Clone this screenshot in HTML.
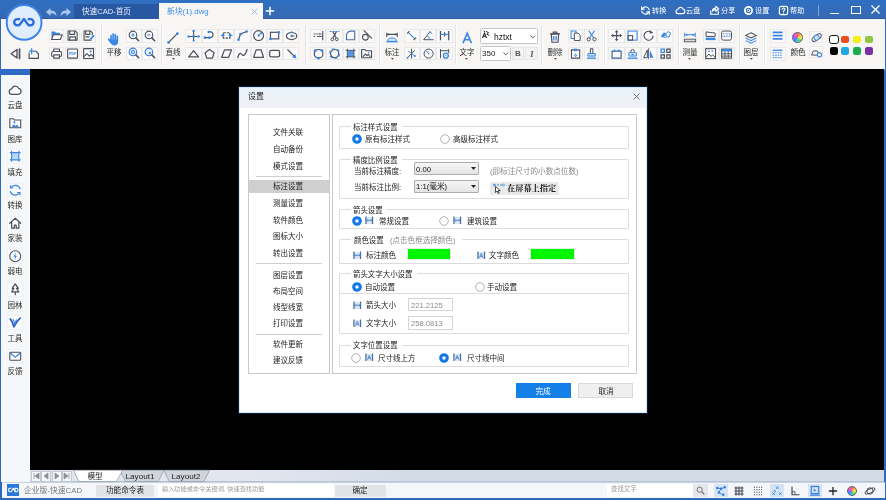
<!DOCTYPE html>
<html lang="zh-CN"><head><meta charset="utf-8"><title>快速CAD</title>
<style>
html,body{margin:0;padding:0;}
body{width:886px;height:500px;position:relative;overflow:hidden;background:#000;font-family:"Liberation Sans","Noto Sans CJK SC",sans-serif;}
body div,body svg{position:absolute;}
svg{overflow:visible;}
.t{white-space:nowrap;will-change:transform;}
</style></head><body>
<svg width="0" height="0" style="left:0;top:0"><defs><linearGradient id="wh" x1="0" y1="0" x2="1" y2="1"><stop offset="0" stop-color="#ff5a8a"/><stop offset=".35" stop-color="#ffd84a"/><stop offset=".6" stop-color="#6fdc6f"/><stop offset=".8" stop-color="#4ab0ff"/><stop offset="1" stop-color="#a05aff"/></linearGradient></defs></svg>
<div style="left:0px;top:0px;width:886px;height:500px;background:#2d6abb;"></div>
<div style="left:0px;top:0px;width:886px;height:18.7px;background:linear-gradient(#2e6fc2,#3869b1);"></div>
<div style="left:0px;top:17.9px;width:886px;height:0.8px;background:#2d5c9f;"></div>
<div style="left:1.2px;top:18.7px;width:883.4px;height:50.6px;background:#f7f6f5;"></div>
<div style="left:1.2px;top:68.6px;width:883.4px;height:0.7px;background:#c3cad6;"></div>
<div style="left:29.6px;top:69.3px;width:854.4px;height:400.7px;background:#000;"></div>
<div style="left:74.2px;top:4px;width:85.8px;height:14.7px;background:#2958a2;"></div>
<div class="t" style="left:81.5px;top:6.40px;height:12px;line-height:12px;font-size:7.6px;color:#e6eefb;">快速CAD-首页</div>
<div style="left:159px;top:3px;width:104px;height:16.5px;background:#f7f6f5;"></div>
<div class="t" style="left:167px;top:6.40px;height:12px;line-height:12px;font-size:7.8px;color:#3f8be6;">新块(1).dwg</div>
<svg style="left:250.5px;top:8px" width="7" height="7" viewBox="0 0 7 7"><path d="M.7.7l5.600 5.600M6.300.7L.7 6.300" stroke="#9dbbe0" stroke-width="1"/></svg>
<svg style="left:265px;top:5.500px" width="10" height="10" viewBox="0 0 10 10"><path d="M5 .8v8.400M.8 5h8.400" stroke="#fff" stroke-width="1.500"/></svg>
<svg style="left:46px;top:7.500px" width="11" height="9" viewBox="0 0 11 9"><path d="M0 4L4.500 0v2.500c4 0 6 2 6 6-1-2.500-3-3.200-6-3.200V8z" fill="#a9c8f0"/></svg>
<svg style="left:60px;top:7.500px" width="11" height="9" viewBox="0 0 11 9"><path d="M11 4L6.500 0v2.500c-4 0-6 2-6 6 1-2.500 3-3.200 6-3.200V8z" fill="#a9c8f0"/></svg>
<svg style="left:4px;top:1.500px" width="41" height="41" viewBox="0 0 41 41"><circle cx="20.100" cy="20.400" r="17.400" fill="#dfedfd" stroke="#3b82e6" stroke-width="1.900"/><g fill="none" stroke="#2b6fd6" stroke-width="2.400" stroke-linejoin="miter" stroke-linecap="butt"><path d="M16.200 17.100h-2.900a3.100 3.100 0 000 6.200h2.400"/><path d="M15.200 23.300l2-2.700 2.700-3.700 2.700 3.700 2 2.700" stroke-linejoin="round"/><path d="M23.600 17.100h2.900a3.100 3.100 0 010 6.200h-2.400"/></g></svg>
<svg style="left:639.8px;top:4.500px" width="11" height="11" viewBox="0 0 16 16"><g fill="none" stroke="#fff" stroke-width="1.700" stroke-linecap="round" stroke-linejoin="round"><path d="M13.500 7A5.500 5.500 0 004 4.500L2.500 6M2.500 9A5.500 5.500 0 0012 11.500L13.500 10"/><path d="M2.500 2.500V6H6M13.500 13.500V10H10"/></g></svg>
<div class="t" style="left:651.5px;top:5.20px;height:12px;line-height:12px;font-size:7.15px;color:#fff;">转换</div>
<svg style="left:674.5px;top:4.500px" width="11" height="11" viewBox="0 0 16 16"><g fill="none" stroke="#fff" stroke-width="1.700" stroke-linecap="round" stroke-linejoin="round"><path d="M4.500 12.500a3 3 0 01-.3-6 4 4 0 017.600-.5 3.300 3.300 0 01-.3 6.500z"/></g></svg>
<div class="t" style="left:686.3px;top:5.20px;height:12px;line-height:12px;font-size:7.15px;color:#fff;">云盘</div>
<svg style="left:708.8px;top:4.500px" width="11" height="11" viewBox="0 0 16 16"><g fill="none" stroke="#fff" stroke-width="1.700" stroke-linecap="round" stroke-linejoin="round"><path d="M2.500 9v4.500h11V9"/><path d="M5 9c0-3 2-4.500 5-4.500V2l4 3.500-4 3.500V6.800C7.500 6.800 6 7.500 5 9z"/></g></svg>
<div class="t" style="left:720.5px;top:5.20px;height:12px;line-height:12px;font-size:7.15px;color:#fff;">分享</div>
<svg style="left:743.4px;top:4.500px" width="11" height="11" viewBox="0 0 16 16"><g fill="none" stroke="#fff" stroke-width="1.700" stroke-linecap="round" stroke-linejoin="round"><circle cx="8" cy="8" r="5.300" stroke-width="2.600"/><circle cx="8" cy="8" r="1.800" stroke-width="1.400"/></g></svg>
<div class="t" style="left:755.3px;top:5.20px;height:12px;line-height:12px;font-size:7.15px;color:#fff;">设置</div>
<svg style="left:778.1px;top:4.500px" width="11" height="11" viewBox="0 0 16 16"><g fill="none" stroke="#fff" stroke-width="1.700" stroke-linecap="round" stroke-linejoin="round"><rect x="2" y="2" width="12" height="12" rx="2.500"/><path d="M6 6.300a2 2 0 114 0c0 1.400-2 1.600-2 3.200M8 11.800v.3" stroke-width="1.500"/></g></svg>
<div class="t" style="left:790.2px;top:5.20px;height:12px;line-height:12px;font-size:7.15px;color:#fff;">帮助</div>
<div style="left:818.3px;top:5px;width:1px;height:10.5px;background:#7fa6db;"></div>
<div style="left:830.4px;top:12.6px;width:8.2px;height:1.2px;background:#fff;"></div>
<div style="left:851px;top:5.5px;width:10px;height:8.4px;box-sizing:border-box;border:1.300px solid #fff;"></div>
<svg style="left:871.300px;top:5.300px" width="9" height="9" viewBox="0 0 9 9"><path d="M.5.500l8 8M8.500.5l-8 8" stroke="#fff" stroke-width="1.300"/></svg>
<svg style="left:8.95px;top:46.85px;" width="13.5" height="13.5" viewBox="0 0 16 16"><g fill="none" stroke="#4a4f59" stroke-width="1.6" stroke-linecap="round" stroke-linejoin="round"><path d="M9.500 3L2.500 8l7 5z"/><path d="M12.500 2.500v11" stroke-width="2"/></g></svg>
<svg style="left:27.25px;top:46.85px;" width="13.5" height="13.5" viewBox="0 0 16 16"><g fill="none" stroke="#4a4f59" stroke-width="1.35" stroke-linecap="round" stroke-linejoin="round"><path d="M2.500 7v6.500h11V8l-3-3H9"/></g><path d="M5.500 1.500v7M2.500 5h6" stroke="#3a86e4" stroke-width="1.500" fill="none"/></svg>
<div style="left:48.900000000000006px;top:28.800000000000004px;width:15.6px;height:13.8px;box-sizing:border-box;border:1px solid #ebe8e8;background:#f9f9fa;"></div>
<svg style="left:50.1px;top:29.1px;" width="13.2" height="13.2" viewBox="0 0 16 16"><path d="M1.800 3h4.200l1.200 1.600H12V7H3.500L1.800 11z" fill="#3a86e4"/><g fill="none" stroke="#4a4f59" stroke-width="1.350" stroke-linejoin="round"><path d="M1.800 12.800l2.400-5.800H15l-2.600 5.800z" fill="#fafafb"/></g></svg>
<div style="left:48.900000000000006px;top:46.6px;width:15.6px;height:13.8px;box-sizing:border-box;border:1px solid #ebe8e8;background:#f9f9fa;"></div>
<svg style="left:50.1px;top:46.9px;" width="13.2" height="13.2" viewBox="0 0 16 16"><g fill="none" stroke="#4a4f59" stroke-width="1.35" stroke-linecap="round" stroke-linejoin="round"><path d="M4.500 5.500v-3h7v3"/><rect x="2" y="5.500" width="12" height="6" rx="1.500"/><path d="M4.500 9.500h7v4h-7z" fill="#fff"/></g></svg>
<div style="left:64.8px;top:28.800000000000004px;width:15.6px;height:13.8px;box-sizing:border-box;border:1px solid #ebe8e8;background:#f9f9fa;"></div>
<svg style="left:66.0px;top:29.1px;" width="13.2" height="13.2" viewBox="0 0 16 16"><g fill="none" stroke="#4a4f59" stroke-width="1.35" stroke-linecap="round" stroke-linejoin="round"><path d="M2.5 2.5h9l2 2v9h-11z"/><path d="M4.5 2.5v4h6v-4"/><path d="M4.5 13.5v-4h7v4"/></g></svg>
<div style="left:64.8px;top:46.6px;width:15.6px;height:13.8px;box-sizing:border-box;border:1px solid #ebe8e8;background:#f9f9fa;"></div>
<svg style="left:66.0px;top:46.9px;" width="13.2" height="13.2" viewBox="0 0 16 16"><g fill="none" stroke="#4a4f59" stroke-width="1.35" stroke-linecap="round" stroke-linejoin="round"><rect x="2" y="2.500" width="12" height="11" rx="0.500"/></g><text x="8" y="10" font-size="4.500" font-weight="bold" text-anchor="middle" fill="#3a86e4" font-family="Liberation Sans,sans-serif">PDF</text></svg>
<div style="left:80.9px;top:28.800000000000004px;width:15.6px;height:13.8px;box-sizing:border-box;border:1px solid #ebe8e8;background:#f9f9fa;"></div>
<svg style="left:82.10000000000001px;top:29.1px;" width="13.2" height="13.2" viewBox="0 0 16 16"><g fill="none" stroke="#4a4f59" stroke-width="1.35" stroke-linecap="round" stroke-linejoin="round"><path d="M11 13.5H2.500v-11h8l2 2V7"/><path d="M4.500 2.500v4h5v-4"/><path d="M4.500 9.500h4"/></g><path d="M9 14l1-3 4-4 1.500 1.500-4 4z" fill="#3a86e4"/></svg>
<div style="left:80.9px;top:46.6px;width:15.6px;height:13.8px;box-sizing:border-box;border:1px solid #ebe8e8;background:#f9f9fa;"></div>
<svg style="left:82.10000000000001px;top:46.9px;" width="13.2" height="13.2" viewBox="0 0 16 16"><g fill="none" stroke="#4a4f59" stroke-width="1.35" stroke-linecap="round" stroke-linejoin="round"><rect x="2" y="2" width="12" height="12"/><path d="M2 12l4-4 3 3 2-2 3 3"/></g><circle cx="10.500" cy="5.500" r="1.300" fill="#3a86e4"/></svg>
<div style="left:101.3px;top:25px;width:1px;height:39.5px;background:#e3e4e8;"></div>
<div style="left:102.3px;top:25px;width:1px;height:39.5px;background:#fdfdfd;"></div>
<svg style="left:106.5px;top:31.5px;" width="14" height="14" viewBox="0 0 16 16"><g stroke="#3a86e4" stroke-width="1.900" stroke-linecap="round"><path d="M4.600 9V4.200M7 8.500V2.500M9.400 8.500V3M11.800 9V5"/><path d="M2 8.500l2.800 3.500" stroke-width="2.100"/></g><path d="M3.700 8.500h9.050v2.500c0 2.800-1.800 4.300-4.300 4.300-2.200 0-3.500-1-4.750-3.300z" fill="#3a86e4"/></svg>
<div class="t" style="left:113.5px;top:46.90px;height:12px;line-height:12px;font-size:7.5px;color:#2a2a2a;transform:translateX(-50%);">平移</div>
<div style="left:126.2px;top:28.800000000000004px;width:15.6px;height:13.8px;box-sizing:border-box;border:1px solid #ebe8e8;background:#f9f9fa;"></div>
<svg style="left:127.9px;top:29.6px;" width="12.2" height="12.2" viewBox="0 0 16 16"><circle cx="6.500" cy="6.500" r="5" fill="#fdfdfd" stroke="#4a4f59" stroke-width="1.400"/><path d="M10.300 10.300l3.700 3.700" stroke="#4a4f59" stroke-width="2" stroke-linecap="round"/><path d="M4.300 6.500h4.400M6.500 4.300v4.400" stroke="#3a86e4" stroke-width="1.400"/></svg>
<div style="left:126.2px;top:46.6px;width:15.6px;height:13.8px;box-sizing:border-box;border:1px solid #ebe8e8;background:#f9f9fa;"></div>
<svg style="left:127.9px;top:47.4px;" width="12.2" height="12.2" viewBox="0 0 16 16"><circle cx="6.500" cy="6.500" r="5" fill="#e6effb" stroke="#3a78d2" stroke-width="1.400"/><path d="M10.300 10.300l3.700 3.700" stroke="#4a4f59" stroke-width="2" stroke-linecap="round"/><circle cx="6.500" cy="6.500" r="2" fill="none" stroke="#3a86e4" stroke-width="1.400"/></svg>
<div style="left:142.2px;top:28.800000000000004px;width:15.6px;height:13.8px;box-sizing:border-box;border:1px solid #ebe8e8;background:#f9f9fa;"></div>
<svg style="left:143.9px;top:29.6px;" width="12.2" height="12.2" viewBox="0 0 16 16"><circle cx="6.500" cy="6.500" r="5" fill="#fdfdfd" stroke="#4a4f59" stroke-width="1.400"/><path d="M10.300 10.300l3.700 3.700" stroke="#4a4f59" stroke-width="2" stroke-linecap="round"/><path d="M4.300 6.500h4.400" stroke="#3a86e4" stroke-width="1.400"/></svg>
<div style="left:142.2px;top:46.6px;width:15.6px;height:13.8px;box-sizing:border-box;border:1px solid #ebe8e8;background:#f9f9fa;"></div>
<svg style="left:143.9px;top:47.4px;" width="12.2" height="12.2" viewBox="0 0 16 16"><circle cx="6.500" cy="6.500" r="5" fill="#e6effb" stroke="#3a78d2" stroke-width="1.400"/><path d="M10.300 10.300l3.700 3.700" stroke="#4a4f59" stroke-width="2" stroke-linecap="round"/><path d="M6.500 3.500v3h3a3 3 0 01-3 3z" fill="#3a86e4"/></svg>
<div style="left:160.9px;top:25px;width:1px;height:39.5px;background:#e3e4e8;"></div>
<div style="left:161.9px;top:25px;width:1px;height:39.5px;background:#fdfdfd;"></div>
<svg style="left:166.0px;top:30.700000000000003px;" width="14" height="14" viewBox="0 0 16 16"><path d="M3 13L13 3" stroke="#4a4f59" stroke-width="1.400"/><circle cx="3" cy="13" r="1.600" fill="#3a86e4"/><circle cx="13" cy="3" r="1.600" fill="#3a86e4"/></svg>
<div class="t" style="left:173px;top:46.90px;height:12px;line-height:12px;font-size:7.5px;color:#2a2a2a;transform:translateX(-50%);">直线</div>
<svg style="left:171.6px;top:57.800px" width="2.800" height="1.800" viewBox="0 0 4 2.500"><path d="M0 0h4L2 2.500z" fill="#444"/></svg>
<div style="left:185.4px;top:28.800000000000004px;width:16.2px;height:13.8px;box-sizing:border-box;border:1px solid #ebe8e8;background:#f9f9fa;"></div>
<svg style="left:186.9px;top:29.1px;" width="13.2" height="13.2" viewBox="0 0 16 16"><path d="M8 2v12.500M1.500 9h13" stroke="#4a4f59" stroke-width="1.300"/><circle cx="8" cy="9" r="1.600" fill="#3a86e4"/><circle cx="8" cy="2.300" r="1.500" fill="#3a86e4"/><circle cx="8" cy="14" r="1.300" fill="#3a86e4"/><circle cx="2" cy="9" r="1.500" fill="#3a86e4"/><circle cx="14" cy="9" r="1.500" fill="#3a86e4"/></svg>
<div style="left:185.4px;top:46.6px;width:16.2px;height:13.8px;box-sizing:border-box;border:1px solid #ebe8e8;background:#f9f9fa;"></div>
<svg style="left:186.9px;top:46.9px;" width="13.2" height="13.2" viewBox="0 0 16 16"><g fill="none" stroke="#4a4f59" stroke-width="1.5" stroke-linecap="round" stroke-linejoin="round"><path d="M8 4.500L2 12h12z"/></g></svg>
<div style="left:201.9px;top:28.800000000000004px;width:16.2px;height:13.8px;box-sizing:border-box;border:1px solid #ebe8e8;background:#f9f9fa;"></div>
<svg style="left:203.4px;top:29.1px;" width="13.2" height="13.2" viewBox="0 0 16 16"><path d="M2.500 10.500h6a3.600 3.600 0 10-1.500-6.800" fill="none" stroke="#4a4f59" stroke-width="1.400"/><circle cx="2.300" cy="10.500" r="1.600" fill="#3a86e4"/><circle cx="7.500" cy="10.500" r="1.600" fill="#3a86e4"/><circle cx="7" cy="3.600" r="1.600" fill="#3a86e4"/></svg>
<div style="left:201.9px;top:46.6px;width:16.2px;height:13.8px;box-sizing:border-box;border:1px solid #ebe8e8;background:#f9f9fa;"></div>
<svg style="left:203.4px;top:46.9px;" width="13.2" height="13.2" viewBox="0 0 16 16"><g fill="none" stroke="#4a4f59" stroke-width="1.5" stroke-linecap="round" stroke-linejoin="round"><path d="M8 3l5.500 4-2 6.500h-7l-2-6.500z"/></g></svg>
<div style="left:218.20000000000002px;top:28.800000000000004px;width:16.2px;height:13.8px;box-sizing:border-box;border:1px solid #ebe8e8;background:#f9f9fa;"></div>
<svg style="left:219.70000000000002px;top:29.1px;" width="13.2" height="13.2" viewBox="0 0 16 16"><rect x="4" y="4.500" width="8" height="6.500" fill="none" stroke="#4a4f59" stroke-width="1.400" stroke-dasharray="3 1.200"/><path d="M1 7.800h3M12 7.800h3" stroke="#3a86e4" stroke-width="1.300"/><circle cx="3.800" cy="7.800" r="1.600" fill="#3a86e4"/><circle cx="12.200" cy="7.800" r="1.600" fill="#3a86e4"/></svg>
<div style="left:218.20000000000002px;top:46.6px;width:16.2px;height:13.8px;box-sizing:border-box;border:1px solid #ebe8e8;background:#f9f9fa;"></div>
<svg style="left:219.70000000000002px;top:46.9px;" width="13.2" height="13.2" viewBox="0 0 16 16"><g fill="none" stroke="#4a4f59" stroke-width="1.5" stroke-linecap="round" stroke-linejoin="round"><path d="M5.500 3.500h8.500l-3.500 9H2z"/></g></svg>
<div style="left:234.4px;top:28.800000000000004px;width:16.2px;height:13.8px;box-sizing:border-box;border:1px solid #ebe8e8;background:#f9f9fa;"></div>
<svg style="left:235.9px;top:29.1px;" width="13.2" height="13.2" viewBox="0 0 16 16"><path d="M3 13l2.500-7L13 3" fill="none" stroke="#4a4f59" stroke-width="1.400"/><circle cx="3" cy="13" r="1.600" fill="#3a86e4"/><circle cx="5.500" cy="6" r="1.600" fill="#3a86e4"/><circle cx="13" cy="3" r="1.600" fill="#3a86e4"/></svg>
<div style="left:234.4px;top:46.6px;width:16.2px;height:13.8px;box-sizing:border-box;border:1px solid #ebe8e8;background:#f9f9fa;"></div>
<svg style="left:235.9px;top:46.9px;" width="13.2" height="13.2" viewBox="0 0 16 16"><g fill="none" stroke="#4a4f59" stroke-width="1.5" stroke-linecap="round" stroke-linejoin="round"><path d="M2 13c1.500-5 3-6.500 5-4s4 1.500 6.500-6"/></g></svg>
<div style="left:250.70000000000002px;top:28.800000000000004px;width:16.2px;height:13.8px;box-sizing:border-box;border:1px solid #ebe8e8;background:#f9f9fa;"></div>
<svg style="left:252.20000000000002px;top:29.1px;" width="13.2" height="13.2" viewBox="0 0 16 16"><circle cx="8" cy="8" r="6" fill="none" stroke="#4a4f59" stroke-width="1.400"/><path d="M8 8l3.500-3.500" stroke="#3a86e4" stroke-width="1.300"/><circle cx="8" cy="8" r="1.400" fill="#3a86e4"/><circle cx="11.300" cy="4.700" r="1.200" fill="#3a86e4"/></svg>
<div style="left:250.70000000000002px;top:46.6px;width:16.2px;height:13.8px;box-sizing:border-box;border:1px solid #ebe8e8;background:#f9f9fa;"></div>
<svg style="left:252.20000000000002px;top:46.9px;" width="13.2" height="13.2" viewBox="0 0 16 16"><g fill="none" stroke="#4a4f59" stroke-width="1.5" stroke-linecap="round" stroke-linejoin="round"><path d="M5 3.500h6l3 9H2z"/></g></svg>
<div style="left:266.7px;top:28.800000000000004px;width:16.2px;height:13.8px;box-sizing:border-box;border:1px solid #ebe8e8;background:#f9f9fa;"></div>
<svg style="left:268.2px;top:29.1px;" width="13.2" height="13.2" viewBox="0 0 16 16"><rect x="3" y="4" width="10" height="8" fill="none" stroke="#4a4f59" stroke-width="1.400"/><circle cx="3" cy="12" r="1.700" fill="#3a86e4"/><circle cx="13" cy="4" r="1.700" fill="#3a86e4"/></svg>
<div style="left:266.7px;top:46.6px;width:16.2px;height:13.8px;box-sizing:border-box;border:1px solid #ebe8e8;background:#f9f9fa;"></div>
<svg style="left:268.2px;top:46.9px;" width="13.2" height="13.2" viewBox="0 0 16 16"><g fill="none" stroke="#4a4f59" stroke-width="1.5" stroke-linecap="round" stroke-linejoin="round"><rect x="2" y="4" width="12" height="8" rx="2"/></g></svg>
<div style="left:283.2px;top:28.800000000000004px;width:16.2px;height:13.8px;box-sizing:border-box;border:1px solid #ebe8e8;background:#f9f9fa;"></div>
<svg style="left:284.7px;top:29.1px;" width="13.2" height="13.2" viewBox="0 0 16 16"><ellipse cx="8" cy="8.500" rx="6.300" ry="4.300" fill="none" stroke="#4a4f59" stroke-width="1.400"/><circle cx="8" cy="8.500" r="1.400" fill="#3a86e4"/><path d="M8 8.500h3.500" stroke="#4a4f59" stroke-width="1.100"/><circle cx="8" cy="4" r="1.200" fill="#3a86e4"/></svg>
<div style="left:283.2px;top:46.6px;width:16.2px;height:13.8px;box-sizing:border-box;border:1px solid #ebe8e8;background:#f9f9fa;"></div>
<svg style="left:284.7px;top:46.9px;" width="13.2" height="13.2" viewBox="0 0 16 16"><path d="M3 3l9 9" stroke="#4a4f59" stroke-width="1.500"/><path d="M14 14l-5.500-1.500 4-4z" fill="#3a86e4"/></svg>
<div style="left:305.3px;top:25px;width:1px;height:39.5px;background:#e3e4e8;"></div>
<div style="left:306.3px;top:25px;width:1px;height:39.5px;background:#fdfdfd;"></div>
<div style="left:310.09999999999997px;top:28.800000000000004px;width:16.2px;height:13.8px;box-sizing:border-box;border:1px solid #ebe8e8;background:#f9f9fa;"></div>
<svg style="left:311.59999999999997px;top:29.1px;" width="13.2" height="13.2" viewBox="0 0 16 16"><path d="M2 6h7M2 9h3" stroke="#4a4f59" stroke-width="1.200" stroke-dasharray="2 1"/><path d="M6 9h6" stroke="#4a4f59" stroke-width="1.200"/><path d="M13 2.500v11" stroke="#4a4f59" stroke-width="1.400"/><path d="M9 4.500L11.500 6 9 7.500z" fill="#4a4f59"/></svg>
<div style="left:310.09999999999997px;top:46.6px;width:16.2px;height:13.8px;box-sizing:border-box;border:1px solid #ebe8e8;background:#f9f9fa;"></div>
<svg style="left:311.59999999999997px;top:46.9px;" width="13.2" height="13.2" viewBox="0 0 16 16"><circle cx="8" cy="8.300" r="5.300" fill="none" stroke="#4a4f59" stroke-width="1.400"/><circle cx="3.800" cy="4.300" r="1.700" fill="#3a86e4"/><circle cx="12.200" cy="4.300" r="1.700" fill="#3a86e4"/><circle cx="8" cy="13.600" r="1.700" fill="#3a86e4"/></svg>
<div style="left:326.4px;top:28.800000000000004px;width:16.2px;height:13.8px;box-sizing:border-box;border:1px solid #ebe8e8;background:#f9f9fa;"></div>
<svg style="left:327.9px;top:29.1px;" width="13.2" height="13.2" viewBox="0 0 16 16"><path d="M2 3h12" stroke="#3a86e4" stroke-width="1.300" stroke-dasharray="2.500 1"/><path d="M6 3.500l4 7.500M10 3.500L6 11" stroke="#4a4f59" stroke-width="1.400"/><circle cx="5.300" cy="12.500" r="1.700" fill="none" stroke="#4a4f59" stroke-width="1.200"/><circle cx="10.700" cy="12.500" r="1.700" fill="none" stroke="#4a4f59" stroke-width="1.200"/></svg>
<div style="left:326.4px;top:46.6px;width:16.2px;height:13.8px;box-sizing:border-box;border:1px solid #ebe8e8;background:#f9f9fa;"></div>
<svg style="left:327.9px;top:46.9px;" width="13.2" height="13.2" viewBox="0 0 16 16"><circle cx="8" cy="8" r="5" fill="none" stroke="#4a4f59" stroke-width="1.400"/><path d="M5 2.500h6l2.500 2.500v6L11 13.500H5L2.500 11V5z" fill="none" stroke="#3a86e4" stroke-width="1.500" stroke-dasharray="3.500 2.800"/></svg>
<div style="left:342.59999999999997px;top:28.800000000000004px;width:16.2px;height:13.8px;box-sizing:border-box;border:1px solid #ebe8e8;background:#f9f9fa;"></div>
<svg style="left:344.09999999999997px;top:29.1px;" width="13.2" height="13.2" viewBox="0 0 16 16"><path d="M3 13V8a5.500 5.500 0 015.500-5.500H13V13z" fill="none" stroke="#4a6fa8" stroke-width="1.400"/></svg>
<div style="left:342.59999999999997px;top:46.6px;width:16.2px;height:13.8px;box-sizing:border-box;border:1px solid #ebe8e8;background:#f9f9fa;"></div>
<svg style="left:344.09999999999997px;top:46.9px;" width="13.2" height="13.2" viewBox="0 0 16 16"><rect x="4" y="4" width="8" height="8" fill="#3a86e4" opacity=".85"/><path d="M2 4h12M2 12h12M4 2v12M12 2v12" stroke="#4a4f59" stroke-width="1.100"/></svg>
<div style="left:358.79999999999995px;top:28.800000000000004px;width:16.2px;height:13.8px;box-sizing:border-box;border:1px solid #ebe8e8;background:#f9f9fa;"></div>
<svg style="left:360.29999999999995px;top:29.1px;" width="13.2" height="13.2" viewBox="0 0 16 16"><g fill="none" stroke="#4a4f59" stroke-width="1.35" stroke-linecap="round" stroke-linejoin="round"><circle cx="6.500" cy="10" r="3.500"/><path d="M5 2l9 9"/></g></svg>
<div style="left:358.79999999999995px;top:46.6px;width:16.2px;height:13.8px;box-sizing:border-box;border:1px solid #ebe8e8;background:#f9f9fa;"></div>
<svg style="left:360.29999999999995px;top:46.9px;" width="13.2" height="13.2" viewBox="0 0 16 16"><g fill="none" stroke="#4a4f59" stroke-width="1.35" stroke-linecap="round" stroke-linejoin="round"><path d="M2 13V3h4l1 1.500h7V13z"/><path d="M4 11.500l2.500-3 2 2 1.500-1.500 2 2.500"/></g><circle cx="10.500" cy="7" r="1" fill="#3a86e4"/></svg>
<div style="left:378.9px;top:25px;width:1px;height:39.5px;background:#e3e4e8;"></div>
<div style="left:379.9px;top:25px;width:1px;height:39.5px;background:#fdfdfd;"></div>
<svg style="left:384.9px;top:30.299999999999997px;" width="14" height="14" viewBox="0 0 16 16"><path d="M2 3v5M14 3v5M2 5h12" stroke="#4a4f59" stroke-width="1.200"/><path d="M2 5l2.500-1.300v2.600zM14 5l-2.500-1.300v2.600z" fill="#4a4f59"/><path d="M3 13a5 4 0 0110 0z" fill="#cfe2f8" stroke="#3a86e4" stroke-width="1.100"/><path d="M1.500 13.500h13" stroke="#3a86e4" stroke-width="1.300"/></svg>
<div class="t" style="left:391.9px;top:46.90px;height:12px;line-height:12px;font-size:7.5px;color:#2a2a2a;transform:translateX(-50%);">标注</div>
<svg style="left:390.5px;top:57.800px" width="2.800" height="1.800" viewBox="0 0 4 2.500"><path d="M0 0h4L2 2.500z" fill="#444"/></svg>
<div style="left:403.59999999999997px;top:28.800000000000004px;width:16.2px;height:13.8px;box-sizing:border-box;border:1px solid #ebe8e8;background:#f9f9fa;"></div>
<svg style="left:405.09999999999997px;top:29.1px;" width="13.2" height="13.2" viewBox="0 0 16 16"><path d="M4 4l8 8" stroke="#3a86e4" stroke-width="1.300"/><path d="M2.500 5.500l3-3M10.500 13.500l3-3" stroke="#4a4f59" stroke-width="1.300"/></svg>
<div style="left:403.59999999999997px;top:46.6px;width:16.2px;height:13.8px;box-sizing:border-box;border:1px solid #ebe8e8;background:#f9f9fa;"></div>
<svg style="left:405.09999999999997px;top:46.9px;" width="13.2" height="13.2" viewBox="0 0 16 16"><path d="M8 2v12M3 13L12 4" stroke="#4a4f59" stroke-width="1.200"/><path d="M4 5l8 6" stroke="#3a86e4" stroke-width="1.200"/><circle cx="3" cy="13" r="1.200" fill="#3a86e4"/><circle cx="12" cy="11" r="1.200" fill="#3a86e4"/></svg>
<div style="left:420.09999999999997px;top:28.800000000000004px;width:16.2px;height:13.8px;box-sizing:border-box;border:1px solid #ebe8e8;background:#f9f9fa;"></div>
<svg style="left:421.59999999999997px;top:29.1px;" width="13.2" height="13.2" viewBox="0 0 16 16"><path d="M2 13h12M2 13L10 3" stroke="#4a4f59" stroke-width="1.200"/><path d="M9 13a6 6 0 00-2.500-5" fill="none" stroke="#3a86e4" stroke-width="1.200"/><path d="M9 3l3.500 3" stroke="#3a86e4" stroke-width="1.200"/></svg>
<div style="left:420.09999999999997px;top:46.6px;width:16.2px;height:13.8px;box-sizing:border-box;border:1px solid #ebe8e8;background:#f9f9fa;"></div>
<svg style="left:421.59999999999997px;top:46.9px;" width="13.2" height="13.2" viewBox="0 0 16 16"><circle cx="8" cy="8" r="5.500" fill="none" stroke="#4a4f59" stroke-width="1.200"/><path d="M8 8L4.500 4" stroke="#3a86e4" stroke-width="1.200"/><circle cx="8" cy="8" r="1" fill="#3a86e4"/></svg>
<div style="left:436.4px;top:28.800000000000004px;width:16.2px;height:13.8px;box-sizing:border-box;border:1px solid #ebe8e8;background:#f9f9fa;"></div>
<svg style="left:437.9px;top:29.1px;" width="13.2" height="13.2" viewBox="0 0 16 16"><path d="M3 2.500v11M13 2.500v11M8 4v5" stroke="#4a4f59" stroke-width="1.500"/><path d="M3 6.500h10" stroke="#3a86e4" stroke-width="1.400"/></svg>
<div style="left:436.4px;top:46.6px;width:16.2px;height:13.8px;box-sizing:border-box;border:1px solid #ebe8e8;background:#f9f9fa;"></div>
<svg style="left:437.9px;top:46.9px;" width="13.2" height="13.2" viewBox="0 0 16 16"><path d="M3 2.500v11M13 2.500v5M3 4.500h10" stroke="#4a4f59" stroke-width="1.200"/><circle cx="9.500" cy="10.500" r="3" fill="none" stroke="#3a86e4" stroke-width="1.600"/><circle cx="9.500" cy="10.500" r=".8" fill="#3a86e4"/></svg>
<div style="left:454.7px;top:25px;width:1px;height:39.5px;background:#e3e4e8;"></div>
<div style="left:455.7px;top:25px;width:1px;height:39.5px;background:#fdfdfd;"></div>
<svg style="left:460.6px;top:31.599999999999998px;" width="12.4" height="12.4" viewBox="0 0 16 16"><path d="M2.500 14.500L8 1.800 13.500 14.500M4.500 10h7" fill="none" stroke="#3a86e4" stroke-width="2.100"/></svg>
<div class="t" style="left:466.5px;top:46.90px;height:12px;line-height:12px;font-size:7.5px;color:#2a2a2a;transform:translateX(-50%);">文字</div>
<svg style="left:465.1px;top:57.800px" width="2.800" height="1.800" viewBox="0 0 4 2.500"><path d="M0 0h4L2 2.500z" fill="#444"/></svg>
<div style="left:479.8px;top:28.3px;width:57.8px;height:15.9px;box-sizing:border-box;border:1px solid #c3c6cc;background:#fff;border-radius:1.500px;"></div>
<svg style="left:479.5px;top:28.9px;" width="13" height="13" viewBox="0 0 16 16"><path d="M3 11l2.500-6 2.500 6M3.800 9h3.400" fill="none" stroke="#222" stroke-width="1.300"/><path d="M7.500 3l3 1.500-2 2 3 1.500M4.500 2.500l2 1" fill="none" stroke="#222" stroke-width="1.200"/></svg>
<div class="t" style="left:494px;top:31.10px;height:12px;line-height:12px;font-size:8.5px;color:#111;">hztxt</div>
<svg style="left:529.500px;top:34.500px" width="5.500" height="4" viewBox="0 0 6 4"><path d="M.5.500L3 3 5.500.5" fill="none" stroke="#444" stroke-width="1"/></svg>
<div style="left:479.8px;top:46.2px;width:30.8px;height:14.4px;box-sizing:border-box;border:1px solid #c3c6cc;background:#fff;border-radius:1.500px;"></div>
<div class="t" style="left:482.3px;top:47.90px;height:12px;line-height:12px;font-size:8.1px;color:#222;">350</div>
<svg style="left:502.500px;top:52px" width="5.500" height="4" viewBox="0 0 6 4"><path d="M.5.500L3 3 5.500.5" fill="none" stroke="#444" stroke-width="1"/></svg>
<div style="left:512px;top:46.7px;width:12.3px;height:13.8px;box-sizing:border-box;border:1px solid #e6e6e6;background:#f3f3f3;"></div>
<div class="t" style="left:518.1px;top:48.20px;height:12px;line-height:12px;font-size:8px;color:#555;transform:translateX(-50%);font-weight:bold;">B</div>
<div style="left:525.3px;top:46.7px;width:12.3px;height:13.8px;box-sizing:border-box;border:1px solid #e6e6e6;background:#f3f3f3;"></div>
<div class="t" style="left:531.5px;top:48.20px;height:12px;line-height:12px;font-size:8.5px;color:#555;transform:translateX(-50%);font-style:italic;font-family:'Liberation Serif',serif;font-weight:bold;">I</div>
<div style="left:541.3px;top:25px;width:1px;height:39.5px;background:#e3e4e8;"></div>
<div style="left:542.3px;top:25px;width:1px;height:39.5px;background:#fdfdfd;"></div>
<svg style="left:548.0px;top:30.299999999999997px;" width="14" height="14" viewBox="0 0 16 16"><path d="M2.500 4.500h11M6 4.500v-2h4v2" fill="none" stroke="#4a4f59" stroke-width="1.300"/><path d="M3.800 4.500l.7 9.500h7l.7-9.500z" fill="none" stroke="#4a4f59" stroke-width="1.300"/><path d="M6.300 7v5M8 7v5M9.700 7v5" stroke="#3a86e4" stroke-width="1"/></svg>
<div class="t" style="left:555px;top:46.90px;height:12px;line-height:12px;font-size:7.5px;color:#2a2a2a;transform:translateX(-50%);">删除</div>
<svg style="left:553.6px;top:57.800px" width="2.800" height="1.800" viewBox="0 0 4 2.500"><path d="M0 0h4L2 2.500z" fill="#444"/></svg>
<div style="left:567.8000000000001px;top:28.800000000000004px;width:15.6px;height:13.8px;box-sizing:border-box;border:1px solid #ebe8e8;background:#f9f9fa;"></div>
<svg style="left:569.0px;top:29.1px;" width="13.2" height="13.2" viewBox="0 0 16 16"><path d="M2.500 2.500h6v9h-6z" fill="none" stroke="#3a86e4" stroke-width="1.300"/><path d="M6.500 5h4.500l2.500 2.500v6.500h-7z" fill="#fff" stroke="#4a4f59" stroke-width="1.200"/></svg>
<div style="left:567.8000000000001px;top:46.6px;width:15.6px;height:13.8px;box-sizing:border-box;border:1px solid #ebe8e8;background:#f9f9fa;"></div>
<svg style="left:569.0px;top:46.9px;" width="13.2" height="13.2" viewBox="0 0 16 16"><path d="M10 3.500h3v10H3v-10h3" fill="none" stroke="#4a4f59" stroke-width="1.300"/><rect x="6" y="2" width="4" height="3" fill="#3a86e4"/><path d="M8 8v4M6 10h4" stroke="#3a86e4" stroke-width="1.200" stroke-dasharray="1.500 1"/></svg>
<div style="left:583.9000000000001px;top:28.800000000000004px;width:15.6px;height:13.8px;box-sizing:border-box;border:1px solid #ebe8e8;background:#f9f9fa;"></div>
<svg style="left:585.1px;top:29.1px;" width="13.2" height="13.2" viewBox="0 0 16 16"><path d="M4.500 2l6 9M11.500 2l-6 9" stroke="#3a86e4" stroke-width="1.300"/><circle cx="4.500" cy="12.500" r="2" fill="none" stroke="#4a4f59" stroke-width="1.200"/><circle cx="11.500" cy="12.500" r="2" fill="none" stroke="#4a4f59" stroke-width="1.200"/></svg>
<div style="left:583.9000000000001px;top:46.6px;width:15.6px;height:13.8px;box-sizing:border-box;border:1px solid #ebe8e8;background:#f9f9fa;"></div>
<svg style="left:585.1px;top:46.9px;" width="13.2" height="13.2" viewBox="0 0 16 16"><path d="M6.500 2h3v6h-3z" fill="none" stroke="#4a4f59" stroke-width="1.200"/><path d="M3.500 8h9v3h-9z" fill="#cfe2f8" stroke="#3a86e4" stroke-width="1.200"/><path d="M2.500 13.500h11" stroke="#3a86e4" stroke-width="1.600"/></svg>
<div style="left:603.8px;top:25px;width:1px;height:39.5px;background:#e3e4e8;"></div>
<div style="left:604.8px;top:25px;width:1px;height:39.5px;background:#fdfdfd;"></div>
<div style="left:608.4px;top:28.800000000000004px;width:16.2px;height:13.8px;box-sizing:border-box;border:1px solid #ebe8e8;background:#f9f9fa;"></div>
<svg style="left:609.9px;top:29.1px;" width="13.2" height="13.2" viewBox="0 0 16 16"><path d="M8 3v10M3 8h10" stroke="#4a4f59" stroke-width="1.300"/><path d="M8 1.200l2.200 2.800H5.800zM8 14.800l2.200-2.800H5.800zM1.200 8l2.800-2.200v4.400zM14.800 8l-2.800-2.200v4.400z" fill="#4a4f59"/><circle cx="8" cy="8" r="1.300" fill="#4a4f59"/></svg>
<div style="left:608.4px;top:46.6px;width:16.2px;height:13.8px;box-sizing:border-box;border:1px solid #ebe8e8;background:#f9f9fa;"></div>
<svg style="left:609.9px;top:46.9px;" width="13.2" height="13.2" viewBox="0 0 16 16"><path d="M2.500 5v8.500h11V5z" fill="none" stroke="#3d6296" stroke-width="1.400"/><path d="M5.500 3v2.500M10.500 3v2.500" stroke="#3a86e4" stroke-width="1.800"/></svg>
<div style="left:624.8px;top:28.800000000000004px;width:16.2px;height:13.8px;box-sizing:border-box;border:1px solid #ebe8e8;background:#f9f9fa;"></div>
<svg style="left:626.3px;top:29.1px;" width="13.2" height="13.2" viewBox="0 0 16 16"><rect x="2.500" y="2.500" width="11" height="11" fill="none" stroke="#3a86e4" stroke-width="1.300"/><rect x="2.500" y="8" width="5.500" height="5.500" fill="none" stroke="#4a4f59" stroke-width="1.200"/></svg>
<div style="left:624.8px;top:46.6px;width:16.2px;height:13.8px;box-sizing:border-box;border:1px solid #ebe8e8;background:#f9f9fa;"></div>
<svg style="left:626.3px;top:46.9px;" width="13.2" height="13.2" viewBox="0 0 16 16"><path d="M6 7V5a2 2 0 014 0v2" fill="none" stroke="#4a4f59" stroke-width="1.200"/><rect x="3.500" y="7" width="9" height="4" rx="1" fill="none" stroke="#3a86e4" stroke-width="1.300"/><path d="M2 13.500h12" stroke="#3a86e4" stroke-width="1.600"/><rect x="6.500" y="8.500" width="3" height="1.500" fill="#3a86e4"/></svg>
<div style="left:640.9px;top:28.800000000000004px;width:16.2px;height:13.8px;box-sizing:border-box;border:1px solid #ebe8e8;background:#f9f9fa;"></div>
<svg style="left:642.4px;top:29.1px;" width="13.2" height="13.2" viewBox="0 0 16 16"><path d="M12.500 5A5.500 5.500 0 1013.500 8" fill="none" stroke="#4a4f59" stroke-width="1.300"/><path d="M10 1.500l3.500 3.500-4.500.500z" fill="#4a4f59"/></svg>
<div style="left:640.9px;top:46.6px;width:16.2px;height:13.8px;box-sizing:border-box;border:1px solid #ebe8e8;background:#f9f9fa;"></div>
<svg style="left:642.4px;top:46.9px;" width="13.2" height="13.2" viewBox="0 0 16 16"><path d="M8 1.500v13" stroke="#4a4f59" stroke-width="1.100"/><path d="M6.500 3.500v9.500H2z" fill="none" stroke="#4a4f59" stroke-width="1.200"/><path d="M9.500 3.500v9.500H14z" fill="#3a86e4"/></svg>
<div style="left:657.1px;top:28.800000000000004px;width:16.2px;height:13.8px;box-sizing:border-box;border:1px solid #ebe8e8;background:#f9f9fa;"></div>
<svg style="left:658.6px;top:29.1px;" width="13.2" height="13.2" viewBox="0 0 16 16"><path d="M2 9l4-5 3 2-2 5z" fill="#3a86e4"/><path d="M8 6l3-3 3 2-2 5-3-1z" fill="none" stroke="#3a86e4" stroke-width="1.200"/><circle cx="7.500" cy="9" r="1.500" fill="#fff" stroke="#3a86e4"/></svg>
<div style="left:657.1px;top:46.6px;width:16.2px;height:13.8px;box-sizing:border-box;border:1px solid #ebe8e8;background:#f9f9fa;"></div>
<svg style="left:658.6px;top:46.9px;" width="13.2" height="13.2" viewBox="0 0 16 16"><g fill="none" stroke="#4a4f59" stroke-width="1.500"><rect x="9.500" y="2.500" width="4" height="4"/><rect x="2.500" y="9.500" width="4" height="4"/><rect x="9.500" y="9.500" width="4" height="4"/></g><rect x="2.500" y="2.500" width="4" height="4" fill="none" stroke="#3a86e4" stroke-width="1.500"/></svg>
<div style="left:677.8px;top:25px;width:1px;height:39.5px;background:#e3e4e8;"></div>
<div style="left:678.8px;top:25px;width:1px;height:39.5px;background:#fdfdfd;"></div>
<svg style="left:682.8px;top:30.299999999999997px;" width="14" height="14" viewBox="0 0 16 16"><path d="M2 3v5M14 3v5M3 5.500h10" stroke="#3a86e4" stroke-width="1.200"/><path d="M2.500 5.500l2.500-1.500v3zM13.500 5.500L11 4v3z" fill="#3a86e4"/><rect x="1.500" y="10.500" width="13" height="3" fill="#ddd" stroke="#4a4f59" stroke-width="1"/></svg>
<div class="t" style="left:689.8px;top:46.90px;height:12px;line-height:12px;font-size:7.5px;color:#2a2a2a;transform:translateX(-50%);">测量</div>
<svg style="left:688.4px;top:57.800px" width="2.800" height="1.800" viewBox="0 0 4 2.500"><path d="M0 0h4L2 2.500z" fill="#444"/></svg>
<div style="left:703.0px;top:28.800000000000004px;width:15.8px;height:13.8px;box-sizing:border-box;border:1px solid #ebe8e8;background:#f9f9fa;"></div>
<svg style="left:704.3px;top:29.1px;" width="13.2" height="13.2" viewBox="0 0 16 16"><path d="M2.500 3.500l11 1.500v4h-11z" fill="none" stroke="#4a4f59" stroke-width="1.200"/><rect x="2" y="10.500" width="12" height="3" fill="#3a86e4"/></svg>
<div style="left:703.0px;top:46.6px;width:15.8px;height:13.8px;box-sizing:border-box;border:1px solid #ebe8e8;background:#f9f9fa;"></div>
<svg style="left:704.3px;top:46.9px;" width="13.2" height="13.2" viewBox="0 0 16 16"><rect x="2" y="2" width="12" height="12" fill="none" stroke="#4a4f59" stroke-width="1.300"/><path d="M2.500 12.500l3.500-4 2.500 3 2-2 3 3" fill="none" stroke="#4a4f59" stroke-width="1.200"/><path d="M5 5h2M9 5h2" stroke="#3a86e4" stroke-width="1.600"/></svg>
<div style="left:719.1px;top:28.800000000000004px;width:15.8px;height:13.8px;box-sizing:border-box;border:1px solid #ebe8e8;background:#f9f9fa;"></div>
<svg style="left:720.4px;top:29.1px;" width="13.2" height="13.2" viewBox="0 0 16 16"><rect x="2" y="2.500" width="12" height="11" rx="2" fill="none" stroke="#4a4f59" stroke-width="1.200"/><text x="8" y="10.200" font-size="5.800" text-anchor="middle" fill="#3a86e4" font-family="Liberation Sans,sans-serif">123</text></svg>
<div style="left:719.1px;top:46.6px;width:15.8px;height:13.8px;box-sizing:border-box;border:1px solid #ebe8e8;background:#f9f9fa;"></div>
<svg style="left:720.4px;top:46.9px;" width="13.2" height="13.2" viewBox="0 0 16 16"><rect x="2" y="2.500" width="12" height="11" fill="none" stroke="#4a4f59" stroke-width="1.300"/><rect x="2" y="2.500" width="12" height="3" fill="#3a86e4"/><path d="M2 8.200h12M2 11h12M6 5.500v8M10 5.500v8" stroke="#4a4f59" stroke-width="1.100"/></svg>
<div style="left:739.3px;top:25px;width:1px;height:39.5px;background:#e3e4e8;"></div>
<div style="left:740.3px;top:25px;width:1px;height:39.5px;background:#fdfdfd;"></div>
<svg style="left:744.3px;top:30.700000000000003px;" width="14" height="14" viewBox="0 0 16 16"><path d="M8 2l6 3-6 3-6-3z" fill="none" stroke="#4a4f59" stroke-width="1.200"/><path d="M2 8l6 3 6-3M2 11l6 3 6-3" fill="none" stroke="#3a86e4" stroke-width="1.200"/></svg>
<div class="t" style="left:751.3px;top:46.90px;height:12px;line-height:12px;font-size:7.5px;color:#2a2a2a;transform:translateX(-50%);">图层</div>
<svg style="left:749.9px;top:57.800px" width="2.800" height="1.800" viewBox="0 0 4 2.500"><path d="M0 0h4L2 2.500z" fill="#444"/></svg>
<div style="left:764.0px;top:25px;width:1px;height:39.5px;background:#e3e4e8;"></div>
<div style="left:765.0px;top:25px;width:1px;height:39.5px;background:#fdfdfd;"></div>
<div style="left:770.2px;top:28.800000000000004px;width:15.6px;height:13.8px;box-sizing:border-box;border:1px solid #ebe8e8;background:#f9f9fa;"></div>
<svg style="left:771.4px;top:29.1px;" width="13.2" height="13.2" viewBox="0 0 16 16"><path d="M2 4h12M2 8h12M2 12h12" stroke="#3a86e4" stroke-width="2.200"/></svg>
<div style="left:770.2px;top:46.9px;width:15.6px;height:13.8px;box-sizing:border-box;border:1px solid #ebe8e8;background:#f9f9fa;"></div>
<svg style="left:771.4px;top:47.199999999999996px;" width="13.2" height="13.2" viewBox="0 0 16 16"><path d="M2 4h12" stroke="#3a86e4" stroke-width="1.600"/><path d="M2 7h12M2 10h12M2 13h12" stroke="#3a86e4" stroke-width="1.200" stroke-dasharray="2 1"/></svg>
<div style="left:792.4000000000001px;top:32.2px;width:10.6px;height:10.6px;background:conic-gradient(from 0deg,#ff5a7a,#ffb03a,#f3f04a,#7ddc5a,#3ad0c8,#4a90ff,#a05aff,#ff5ac8,#ff5a7a);border-radius:50%;box-sizing:border-box;border:1px solid #5a5f6a;"></div>
<div class="t" style="left:798px;top:46.90px;height:12px;line-height:12px;font-size:7.6px;color:#222;transform:translateX(-50%);">颜色</div>
<div style="left:809.45px;top:30.950000000000003px;width:13.5px;height:12.5px;box-sizing:border-box;border:1px solid #ebe8e8;background:#f9f9fa;"></div>
<svg style="left:809.6px;top:30.6px;" width="13.2" height="13.2" viewBox="0 0 16 16"><ellipse cx="8" cy="8" rx="6.500" ry="3" transform="rotate(-35 8 8)" fill="none" stroke="#4a4f59" stroke-width="1.200"/><circle cx="8" cy="8" r="3.200" fill="#cfe2f8" stroke="#3a86e4" stroke-width="1.200"/></svg>
<div style="left:809.45px;top:45.95px;width:13.5px;height:12.5px;box-sizing:border-box;border:1px solid #ebe8e8;background:#f9f9fa;"></div>
<svg style="left:809.6px;top:45.6px;" width="13.2" height="13.2" viewBox="0 0 16 16"><path d="M2 11l2-5h5l2 5z" fill="none" stroke="#4a4f59" stroke-width="1.200"/><circle cx="11.500" cy="10.500" r="2.500" fill="#fff" stroke="#3a86e4" stroke-width="1.300"/></svg>
<div style="left:829.1px;top:35.1px;width:10px;height:9.2px;box-sizing:border-box;background:#fff;border-radius:2.800px;border:1.300px solid #111;"></div>
<div style="left:841.3px;top:35.900000000000006px;width:8px;height:7.6px;background:#e8501a;border-radius:2.200px;"></div>
<div style="left:853.2px;top:35.900000000000006px;width:8px;height:7.6px;background:#f5f014;border-radius:2.200px;"></div>
<div style="left:865.1px;top:35.900000000000006px;width:8px;height:7.6px;background:#8fc73e;border-radius:2.200px;"></div>
<div style="left:830.1px;top:47.4px;width:8px;height:7.4px;background:#000;border-radius:2.200px;"></div>
<div style="left:841.3px;top:47.4px;width:8px;height:7.4px;background:#1fa9e0;border-radius:2.200px;"></div>
<div style="left:853.2px;top:47.4px;width:8px;height:7.4px;background:#1fae4b;border-radius:2.200px;"></div>
<div style="left:865.1px;top:47.4px;width:8px;height:7.4px;background:#7a2fa5;border-radius:2.200px;"></div>
<div style="left:1.2px;top:69px;width:28.4px;height:413px;background:#f6f7f9;"></div>
<div style="left:0px;top:69.3px;width:29.8px;height:6.1px;background:#2f6bc4;"></div>
<div style="left:6.5px;top:83.0px;width:16.5px;height:14.5px;box-sizing:border-box;background:#fbfcfd;border:1px solid #eff1f4;"></div>
<svg style="left:7.550000000000001px;top:83.05px;" width="14.5" height="14.5" viewBox="0 0 16 16"><g fill="none" stroke="#4a4f59" stroke-width="1.35" stroke-linecap="round" stroke-linejoin="round"><path d="M4.500 12.500a3 3 0 01-.3-6 4 4 0 017.600-.5 3.300 3.300 0 01-.3 6.500z"/></g></svg>
<div class="t" style="left:15px;top:100.40px;height:12px;line-height:12px;font-size:7.5px;color:#2a2a2a;transform:translateX(-50%);">云盘</div>
<div style="left:6.5px;top:116.2px;width:16.5px;height:14.5px;box-sizing:border-box;background:#fbfcfd;border:1px solid #eff1f4;"></div>
<svg style="left:7.550000000000001px;top:116.25px;" width="14.5" height="14.5" viewBox="0 0 16 16"><path d="M2 13V3h4l1 1.500h7V13z" fill="none" stroke="#4a4f59" stroke-width="1.200"/><path d="M4 12l2.500-3 2 2 1.500-1.500L12 12z" fill="#3a86e4"/><circle cx="7" cy="7" r="1.200" fill="#3a86e4"/></svg>
<div class="t" style="left:15px;top:133.60px;height:12px;line-height:12px;font-size:7.5px;color:#2a2a2a;transform:translateX(-50%);">图库</div>
<div style="left:6.5px;top:149.4px;width:16.5px;height:14.5px;box-sizing:border-box;background:#fbfcfd;border:1px solid #eff1f4;"></div>
<svg style="left:7.550000000000001px;top:149.45000000000002px;" width="14.5" height="14.5" viewBox="0 0 16 16"><rect x="4" y="4" width="8" height="8" fill="#bcd6f5"/><path d="M2 4h12M2 12h12M4 2v12M12 2v12" stroke="#3a86e4" stroke-width="1.200"/></svg>
<div class="t" style="left:15px;top:166.80px;height:12px;line-height:12px;font-size:7.5px;color:#2a2a2a;transform:translateX(-50%);">填充</div>
<div style="left:6.5px;top:182.60000000000002px;width:16.5px;height:14.5px;box-sizing:border-box;background:#fbfcfd;border:1px solid #eff1f4;"></div>
<svg style="left:7.550000000000001px;top:182.65000000000003px;" width="14.5" height="14.5" viewBox="0 0 16 16"><path d="M13.500 7A5.600 5.600 0 003.300 5.200M2.500 9a5.600 5.600 0 0010.200 1.800" fill="none" stroke="#3a86e4" stroke-width="1.300"/><path d="M2.800 2.500v3h3M13.200 13.500v-3h-3" fill="none" stroke="#3a86e4" stroke-width="1.300"/></svg>
<div class="t" style="left:15px;top:200.00px;height:12px;line-height:12px;font-size:7.5px;color:#2a2a2a;transform:translateX(-50%);">转换</div>
<div style="left:6.5px;top:215.8px;width:16.5px;height:14.5px;box-sizing:border-box;background:#fbfcfd;border:1px solid #eff1f4;"></div>
<svg style="left:7.550000000000001px;top:215.85000000000002px;" width="14.5" height="14.5" viewBox="0 0 16 16"><g fill="none" stroke="#4a4f59" stroke-width="1.35" stroke-linecap="round" stroke-linejoin="round"><path d="M2 8l6-5.500L14 8M4 7v6.500h3V10h2v3.500h3V7"/></g></svg>
<div class="t" style="left:15px;top:233.20px;height:12px;line-height:12px;font-size:7.5px;color:#2a2a2a;transform:translateX(-50%);">家装</div>
<div style="left:6.5px;top:249.0px;width:16.5px;height:14.5px;box-sizing:border-box;background:#fbfcfd;border:1px solid #eff1f4;"></div>
<svg style="left:7.550000000000001px;top:249.05px;" width="14.5" height="14.5" viewBox="0 0 16 16"><circle cx="8" cy="8" r="6" fill="none" stroke="#4a4f59" stroke-width="1.200"/><path d="M9 3.500L6 8.500h2l-1 4 3-5H8z" fill="#3a86e4"/></svg>
<div class="t" style="left:15px;top:266.40px;height:12px;line-height:12px;font-size:7.5px;color:#2a2a2a;transform:translateX(-50%);">弱电</div>
<div style="left:6.5px;top:282.20000000000005px;width:16.5px;height:14.5px;box-sizing:border-box;background:#fbfcfd;border:1px solid #eff1f4;"></div>
<svg style="left:7.550000000000001px;top:282.25000000000006px;" width="14.5" height="14.5" viewBox="0 0 16 16"><g fill="none" stroke="#4a4f59" stroke-width="1.35" stroke-linecap="round" stroke-linejoin="round"><path d="M8 2L4.500 7h2L4 11h8L9.500 7h2zM8 11v3"/></g></svg>
<div class="t" style="left:15px;top:299.60px;height:12px;line-height:12px;font-size:7.5px;color:#2a2a2a;transform:translateX(-50%);">园林</div>
<div style="left:6.5px;top:315.40000000000003px;width:16.5px;height:14.5px;box-sizing:border-box;background:#fbfcfd;border:1px solid #eff1f4;"></div>
<svg style="left:7.550000000000001px;top:315.45000000000005px;" width="14.5" height="14.5" viewBox="0 0 16 16"><path d="M2.500 4.500c1.500 2 3 5 4 8.500 2-4 4-7 7-9.500" fill="none" stroke="#2d62c0" stroke-width="2" stroke-linecap="round" stroke-linejoin="round"/><path d="M5.500 5c.8 1.500 1.500 3 2 4.500M9.500 5.500c-1 1.300-1.700 2.500-2.300 3.800" fill="none" stroke="#3a86e4" stroke-width="1.300" stroke-linecap="round"/></svg>
<div class="t" style="left:15px;top:332.80px;height:12px;line-height:12px;font-size:7.5px;color:#2a2a2a;transform:translateX(-50%);">工具</div>
<div style="left:6.5px;top:348.6px;width:16.5px;height:14.5px;box-sizing:border-box;background:#fbfcfd;border:1px solid #eff1f4;"></div>
<svg style="left:7.550000000000001px;top:348.65000000000003px;" width="14.5" height="14.5" viewBox="0 0 16 16"><rect x="2" y="3.500" width="12" height="9" rx="1" fill="none" stroke="#4a4f59" stroke-width="1.200"/><path d="M2.500 4.500L8 9l5.500-4.500" fill="none" stroke="#3a86e4" stroke-width="1.300"/></svg>
<div class="t" style="left:15px;top:366.00px;height:12px;line-height:12px;font-size:7.5px;color:#2a2a2a;transform:translateX(-50%);">反馈</div>
<div style="left:29.5px;top:470px;width:854.5px;height:12px;background:linear-gradient(90deg,#e2e7ef 0,#e2e7ef 25%,#d3dbe6 45%);"></div>
<div style="left:29.5px;top:481.4px;width:854.5px;height:0.8px;background:#b9c2cf;"></div>
<div style="left:30.5px;top:471px;width:10px;height:10.5px;box-sizing:border-box;border:1px solid #c3c8d0;background:#f6f7f9;"></div>
<div style="left:41px;top:471px;width:10px;height:10.5px;box-sizing:border-box;border:1px solid #c3c8d0;background:#f6f7f9;"></div>
<div style="left:51.5px;top:471px;width:10px;height:10.5px;box-sizing:border-box;border:1px solid #c3c8d0;background:#f6f7f9;"></div>
<div style="left:62px;top:471px;width:10px;height:10.5px;box-sizing:border-box;border:1px solid #c3c8d0;background:#f6f7f9;"></div>
<svg style="left:31.5px;top:472.2px" width="8" height="8" viewBox="0 0 8 8"><g fill="#8a9099" stroke="#8a9099" stroke-width=".8"><path d="M2 1v6M7 1L3 4l4 3z"/></g></svg>
<svg style="left:42px;top:472.2px" width="8" height="8" viewBox="0 0 8 8"><g fill="#8a9099" stroke="#8a9099" stroke-width=".8"><path d="M6 1L2 4l4 3z"/></g></svg>
<svg style="left:52.5px;top:472.2px" width="8" height="8" viewBox="0 0 8 8"><g fill="#8a9099" stroke="#8a9099" stroke-width=".8"><path d="M2 1l4 3-4 3z"/></g></svg>
<svg style="left:63px;top:472.2px" width="8" height="8" viewBox="0 0 8 8"><g fill="#8a9099" stroke="#8a9099" stroke-width=".8"><path d="M6 1v6M1 1l4 3-4 3z"/></g></svg>
<svg style="left:72.500px;top:470px" width="150" height="12" viewBox="0 0 150 12"><path d="M90.800 .3l5.500 11.200h34.700l5.500-11.200z" fill="#d1d5db" stroke="#8e97a4" stroke-width=".7"/><path d="M47 .3l5.500 11.200h32.800l5.500-11.200z" fill="#d1d5db" stroke="#8e97a4" stroke-width=".7"/><path d="M.5 .3L6 11.500h37.500l6-11.200z" fill="#fff" stroke="#8e97a4" stroke-width=".7"/></svg>
<div class="t" style="left:95px;top:470.90px;height:12px;line-height:12px;font-size:7.6px;color:#222;transform:translateX(-50%);">模型</div>
<div class="t" style="left:139.8px;top:470.90px;height:12px;line-height:12px;font-size:8.1px;color:#222;transform:translateX(-50%);">Layout1</div>
<div class="t" style="left:185.9px;top:470.90px;height:12px;line-height:12px;font-size:8.1px;color:#222;transform:translateX(-50%);">Layout2</div>
<div style="left:1.5px;top:482px;width:883px;height:16.3px;background:#f4f6f9;"></div>
<div style="left:1.5px;top:482px;width:883px;height:0.8px;background:#c5d3e6;"></div>
<div style="left:6.5px;top:484.2px;width:12.6px;height:11.6px;background:#2b78dc;"></div>
<svg style="left:7.500px;top:487px" width="10.500" height="6" viewBox="0 0 21 12"><g fill="none" stroke="#fff" stroke-width="2.200" stroke-linejoin="round"><path d="M6.500 2.500H4.500a3.500 3.500 0 000 7H6.500"/><path d="M6.500 9.500L10.500 2.500l4 7"/><path d="M14 2.500h2.500a3.500 3.500 0 010 7H14z"/></g></svg>
<div class="t" style="left:24px;top:484.80px;height:12px;line-height:12px;font-size:7.8px;color:#777;">企业版-快速CAD</div>
<div style="left:96px;top:484.5px;width:57.5px;height:12px;background:#e1e3e6;"></div>
<div class="t" style="left:124.7px;top:485.10px;height:12px;line-height:12px;font-size:7.6px;color:#222;transform:translateX(-50%);">功能命令表</div>
<div style="left:158px;top:484px;width:176px;height:13px;background:#fff;"></div>
<div class="t" style="left:162px;top:483.40px;height:12px;line-height:12px;font-size:6.2px;color:#999;">输入功能或命令关键词, 快速查找功能</div>
<div style="left:334.5px;top:484.5px;width:51px;height:12px;background:#e1e3e6;"></div>
<div class="t" style="left:360px;top:485.10px;height:12px;line-height:12px;font-size:7.6px;color:#222;transform:translateX(-50%);">确定</div>
<div style="left:607px;top:484px;width:86px;height:13px;background:#fff;"></div>
<div class="t" style="left:611px;top:483.40px;height:12px;line-height:12px;font-size:6.4px;color:#999;">查找文字</div>
<div style="left:693px;top:484px;width:14.5px;height:13px;background:#e4e6e9;"></div>
<svg style="left:695.500px;top:486px" width="9" height="9" viewBox="0 0 9 9"><circle cx="3.700" cy="3.700" r="2.600" fill="none" stroke="#666" stroke-width=".9"/><path d="M5.700 5.700L8.300 8.300" stroke="#666" stroke-width="1.100"/></svg>
<div style="left:714px;top:484px;width:14px;height:13px;background:#d5e3f5;"></div>
<svg style="left:715px;top:484.5px" width="12" height="12" viewBox="0 0 16 16"><g fill="none" stroke="#2b7de0" stroke-width="1.200"><path d="M3 4l5 1 5-2M8 5l-3 5 6 3"/></g><g fill="#2b7de0"><circle cx="3" cy="4" r="1.600"/><circle cx="8" cy="5" r="1.600"/><circle cx="13" cy="3" r="1.600"/><circle cx="5" cy="10" r="1.600"/><circle cx="11" cy="13" r="1.600"/></g></svg>
<svg style="left:733.1px;top:484.5px" width="12" height="12" viewBox="0 0 16 16"><path d="M2 4h12M2 8h12M2 12h12M4 2v12M8 2v12M12 2v12" stroke="#444a55" stroke-width="1.500"/></svg>
<svg style="left:751.9px;top:484.5px" width="12" height="12" viewBox="0 0 16 16"><path d="M2.500 3h11M2.500 6.300h11M2.500 9.600h11M2.500 13h11" stroke="#444a55" stroke-width="1.500" stroke-dasharray="1.500 1.700"/></svg>
<div style="left:769.7px;top:484px;width:14px;height:13px;background:#d5e3f5;"></div>
<svg style="left:770.7px;top:484.5px" width="12" height="12" viewBox="0 0 16 16"><path d="M7 2l3 3M10 2L7 5M2 10l3 3M5 10l-3 3M11 10l3 3M14 10l-3 3" stroke="#2b7de0" stroke-width="1.300"/><path d="M4 7l2 2M6 7L4 9" stroke="#2b7de0" stroke-width="1.100"/></svg>
<svg style="left:788.6px;top:484.5px" width="12" height="12" viewBox="0 0 16 16"><path d="M4 2v11h10" fill="none" stroke="#444a55" stroke-width="1.600"/><path d="M4 9h4v4" fill="none" stroke="#444a55" stroke-width="1.100"/></svg>
<div style="left:808px;top:484px;width:14px;height:13px;background:#d5e3f5;"></div>
<svg style="left:809px;top:484.5px" width="12" height="12" viewBox="0 0 16 16"><rect x="3" y="2" width="10" height="9.500" fill="#cfe2f8" stroke="#2b7de0" stroke-width="1.500"/><path d="M1.500 13.500h13" stroke="#2b7de0" stroke-width="1.600"/><path d="M6.500 4.500v4l3-1z" fill="#2b7de0"/></svg>
<svg style="left:826.7px;top:484.5px" width="12" height="12" viewBox="0 0 16 16"><path d="M8 2.500v11M2.500 8h11" stroke="#222" stroke-width="1.700"/></svg>
<svg style="left:845.5px;top:484.5px" width="12" height="12" viewBox="0 0 16 16"></svg>
<svg style="left:864.3px;top:484.5px" width="12" height="12" viewBox="0 0 16 16"><circle cx="8" cy="8" r="4.200" fill="#fff" stroke="#444a55" stroke-width="1.300"/><ellipse cx="8" cy="8" rx="7.300" ry="2.600" transform="rotate(-28 8 8)" fill="none" stroke="#444a55" stroke-width="1.200"/></svg>
<div style="left:846.5px;top:485.6px;width:10px;height:10px;background:conic-gradient(from 0deg,#ff5a7a,#ffb03a,#f3f04a,#7ddc5a,#3ad0c8,#4a90ff,#a05aff,#ff5ac8,#ff5a7a);border-radius:50%;box-sizing:border-box;border:1px solid #5a5f6a;"></div>
<div style="left:239px;top:86.8px;width:408.3px;height:326px;box-sizing:border-box;background:#fff;border:1px solid #cfe6fb;box-shadow:0 0 0 .7px #0c2b4c;"></div>
<div style="left:240px;top:87.8px;width:406.3px;height:20px;background:linear-gradient(#e8f1fb,#f0f1f4);"></div>
<div class="t" style="left:248.4px;top:91.40px;height:12px;line-height:12px;font-size:7.9px;color:#222;">设置</div>
<svg style="left:632.500px;top:92.700px" width="7" height="7" viewBox="0 0 7 7"><path d="M.5.500l6 6M6.500.5l-6 6" stroke="#666" stroke-width=".9"/></svg>
<div style="left:248px;top:114.3px;width:81.6px;height:259.7px;box-sizing:border-box;border:1px solid #c9c9c9;background:#fff;"></div>
<div style="left:332.3px;top:114.3px;width:304.8px;height:259.7px;box-sizing:border-box;border:1px solid #c9c9c9;background:#fff;"></div>
<div style="left:249px;top:179.6px;width:79.6px;height:13px;background:#cfcfcf;"></div>
<div class="t" style="left:288px;top:127.30px;height:12px;line-height:12px;font-size:7.5px;color:#222;transform:translateX(-50%);">文件关联</div>
<div class="t" style="left:288px;top:144.20px;height:12px;line-height:12px;font-size:7.5px;color:#222;transform:translateX(-50%);">自动备份</div>
<div class="t" style="left:288px;top:160.90px;height:12px;line-height:12px;font-size:7.5px;color:#222;transform:translateX(-50%);">模式设置</div>
<div class="t" style="left:288px;top:180.70px;height:12px;line-height:12px;font-size:7.5px;color:#222;transform:translateX(-50%);">标注设置</div>
<div class="t" style="left:288px;top:197.90px;height:12px;line-height:12px;font-size:7.5px;color:#222;transform:translateX(-50%);">测量设置</div>
<div class="t" style="left:288px;top:214.50px;height:12px;line-height:12px;font-size:7.5px;color:#222;transform:translateX(-50%);">软件颜色</div>
<div class="t" style="left:288px;top:230.60px;height:12px;line-height:12px;font-size:7.5px;color:#222;transform:translateX(-50%);">图标大小</div>
<div class="t" style="left:288px;top:247.50px;height:12px;line-height:12px;font-size:7.5px;color:#222;transform:translateX(-50%);">转出设置</div>
<div class="t" style="left:288px;top:269.60px;height:12px;line-height:12px;font-size:7.5px;color:#222;transform:translateX(-50%);">图层设置</div>
<div class="t" style="left:288px;top:285.50px;height:12px;line-height:12px;font-size:7.5px;color:#222;transform:translateX(-50%);">布局空间</div>
<div class="t" style="left:288px;top:302.10px;height:12px;line-height:12px;font-size:7.5px;color:#222;transform:translateX(-50%);">线型线宽</div>
<div class="t" style="left:288px;top:318.10px;height:12px;line-height:12px;font-size:7.5px;color:#222;transform:translateX(-50%);">打印设置</div>
<div class="t" style="left:288px;top:339.10px;height:12px;line-height:12px;font-size:7.5px;color:#222;transform:translateX(-50%);">软件更新</div>
<div class="t" style="left:288px;top:355.30px;height:12px;line-height:12px;font-size:7.5px;color:#222;transform:translateX(-50%);">建议反馈</div>
<div style="left:256px;top:176.0px;width:66px;height:0.8px;background:#cfcfcf;"></div>
<div style="left:256px;top:262.6px;width:66px;height:0.8px;background:#cfcfcf;"></div>
<div style="left:256px;top:333.6px;width:66px;height:0.8px;background:#cfcfcf;"></div>
<div style="left:339px;top:126.2px;width:289.5px;height:22.799999999999997px;box-sizing:border-box;border:1px solid #dcdcdc;border-radius:1px;"></div>
<div style="left:350.5px;top:122.2px;width:51px;height:9px;background:#fff;"></div>
<div class="t" style="left:353px;top:122.00px;height:12px;line-height:12px;font-size:7.45px;color:#222;">标注样式设置</div>
<svg style="left:350.9px;top:133.4px" width="12" height="12" viewBox="0 0 12 12"><circle cx="6" cy="6" r="3.300" fill="#fff" stroke="#1278e4" stroke-width="3.100"/></svg>
<div class="t" style="left:364.6px;top:134.30px;height:12px;line-height:12px;font-size:7.5px;color:#222;">原有标注样式</div>
<svg style="left:438.6px;top:133.4px" width="12" height="12" viewBox="0 0 12 12"><circle cx="6" cy="6" r="4.300" fill="#fff" stroke="#a6a6a6" stroke-width=".9"/></svg>
<div class="t" style="left:452.9px;top:134.30px;height:12px;line-height:12px;font-size:7.5px;color:#222;">高级标注样式</div>
<div style="left:339px;top:159.2px;width:289.5px;height:39.5px;box-sizing:border-box;border:1px solid #dcdcdc;border-radius:1px;"></div>
<div style="left:350.5px;top:155.2px;width:51px;height:9px;background:#fff;"></div>
<div class="t" style="left:353px;top:155.00px;height:12px;line-height:12px;font-size:7.45px;color:#222;">精度比例设置</div>
<div class="t" style="left:354px;top:165.60px;height:12px;line-height:12px;font-size:7.5px;color:#222;">当前标注精度:</div>
<div class="t" style="left:354px;top:182.30px;height:12px;line-height:12px;font-size:7.5px;color:#222;">当前标注比例:</div>
<div style="left:413.6px;top:162.2px;width:65.2px;height:13.2px;box-sizing:border-box;border:1px solid #adadad;background:linear-gradient(#f6f6f6,#e4e4e4);border-radius:1px;"></div>
<div class="t" style="left:415.90000000000003px;top:163.60px;height:12px;line-height:12px;font-size:7.7px;color:#111;">0.00</div>
<svg style="left:470.8px;top:167.29999999999998px" width="5" height="3" viewBox="0 0 5 3"><path d="M0 0h5L2.500 3z" fill="#222"/></svg>
<div style="left:413.6px;top:179.8px;width:65.2px;height:13.4px;box-sizing:border-box;border:1px solid #adadad;background:linear-gradient(#f6f6f6,#e4e4e4);border-radius:1px;"></div>
<div class="t" style="left:415.90000000000003px;top:181.30px;height:12px;line-height:12px;font-size:7.7px;color:#111;">1:1(毫米)</div>
<svg style="left:470.8px;top:185.0px" width="5" height="3" viewBox="0 0 5 3"><path d="M0 0h5L2.500 3z" fill="#222"/></svg>
<div class="t" style="left:490.1px;top:165.80px;height:12px;line-height:12px;font-size:7.6px;color:#8a8a8a;">(即标注尺寸的小数点位数)</div>
<div style="left:489.9px;top:181.6px;width:69.6px;height:13.4px;background:#eaeaea;"></div>
<svg style="left:492.500px;top:183px" width="12" height="11" viewBox="0 0 12 11"><path d="M1 2h9" stroke="#3f86e2" stroke-width="1" stroke-dasharray="2 1"/><circle cx="1.200" cy="2" r="1" fill="none" stroke="#3f86e2" stroke-width=".7"/><circle cx="10.500" cy="2" r="1" fill="none" stroke="#3f86e2" stroke-width=".7"/><path d="M2.500 3.500v6l1.600-1.500 1.200 2.500 1-.500-1.200-2.400h2.200z" fill="#fff" stroke="#222" stroke-width=".8"/></svg>
<div class="t" style="left:506.8px;top:183.10px;height:12px;line-height:12px;font-size:8.2px;color:#111;font-weight:bold;font-family:'Liberation Serif','Noto Serif CJK SC',serif;">在屏幕上指定</div>
<div style="left:339px;top:208.9px;width:289.5px;height:20.099999999999994px;box-sizing:border-box;border:1px solid #dcdcdc;border-radius:1px;"></div>
<div style="left:350.5px;top:204.9px;width:35px;height:9px;background:#fff;"></div>
<div class="t" style="left:353px;top:204.70px;height:12px;line-height:12px;font-size:7.45px;color:#222;">箭头设置</div>
<svg style="left:350.9px;top:214.8px" width="12" height="12" viewBox="0 0 12 12"><circle cx="6" cy="6" r="3.300" fill="#fff" stroke="#1278e4" stroke-width="3.100"/></svg>
<svg style="left:364.5px;top:216.4px" width="8.500" height="8.500" viewBox="0 0 9 9"><rect x=".5" y="1" width="8" height="7.500" fill="#dde6f0"/><path d="M1 .5v8M8 .5v8" stroke="#4a6f9f" stroke-width="1.300"/><path d="M1 4.500h7" stroke="#3f7fd0" stroke-width="1"/><path d="M2.800 3.300L1.500 4.500l1.300 1.200M6.200 3.300l1.300 1.200-1.300 1.200" fill="none" stroke="#3f7fd0" stroke-width=".7"/></svg>
<div class="t" style="left:379.3px;top:216.20px;height:12px;line-height:12px;font-size:7.5px;color:#222;">常规设置</div>
<svg style="left:438.2px;top:214.8px" width="12" height="12" viewBox="0 0 12 12"><circle cx="6" cy="6" r="4.300" fill="#fff" stroke="#a6a6a6" stroke-width=".9"/></svg>
<svg style="left:452.8px;top:216.4px" width="8.500" height="8.500" viewBox="0 0 9 9"><rect x=".5" y="1" width="8" height="7.500" fill="#dde6f0"/><path d="M1 .5v8M8 .5v8" stroke="#4a6f9f" stroke-width="1.300"/><path d="M1 4.500h7" stroke="#3f7fd0" stroke-width="1"/><path d="M2.800 3.300L1.500 4.500l1.300 1.200M6.200 3.300l1.300 1.200-1.300 1.200" fill="none" stroke="#3f7fd0" stroke-width=".7"/></svg>
<div class="t" style="left:467px;top:216.20px;height:12px;line-height:12px;font-size:7.5px;color:#222;">建筑设置</div>
<div style="left:339px;top:239.2px;width:289.5px;height:25.100000000000023px;box-sizing:border-box;border:1px solid #dcdcdc;border-radius:1px;"></div>
<div style="left:350.5px;top:235.2px;width:111px;height:9px;background:#fff;"></div>
<div class="t" style="left:354.2px;top:235.00px;height:12px;line-height:12px;font-size:7.45px;color:#222;">颜色设置</div>
<div class="t" style="left:390px;top:234.90px;height:12px;line-height:12px;font-size:7.55px;color:#8a8a8a;">(点击色框选择颜色)</div>
<svg style="left:352.7px;top:250.60000000000002px" width="8.500" height="8.500" viewBox="0 0 9 9"><rect x=".5" y="1" width="8" height="7.500" fill="#dde6f0"/><path d="M1 .5v8M8 .5v8" stroke="#4a6f9f" stroke-width="1.300"/><path d="M1 4.500h7" stroke="#3f7fd0" stroke-width="1"/><path d="M2.800 3.300L1.500 4.500l1.300 1.200M6.200 3.300l1.300 1.200-1.300 1.200" fill="none" stroke="#3f7fd0" stroke-width=".7"/></svg>
<div class="t" style="left:366.4px;top:249.90px;height:12px;line-height:12px;font-size:7.5px;color:#222;">标注颜色</div>
<div style="left:407.5px;top:248.7px;width:42.8px;height:10.6px;background:#00f600;box-shadow:0 0 0 .7px #d4e8d4;"></div>
<svg style="left:477px;top:250.60000000000002px" width="8.500" height="8.500" viewBox="0 0 9 9"><rect x=".5" y="1" width="8" height="7.500" fill="#dde6f0"/><path d="M1 .5v8M8 .5v8" stroke="#4a6f9f" stroke-width="1.300"/><path d="M2.600 7l1.900-4.500L6.400 7M3.300 5.600h2.400" fill="none" stroke="#3f7fd0" stroke-width=".9"/></svg>
<div class="t" style="left:489.4px;top:249.90px;height:12px;line-height:12px;font-size:7.5px;color:#222;">文字颜色</div>
<div style="left:530.6px;top:248.7px;width:43px;height:10.6px;background:#00f600;box-shadow:0 0 0 .7px #d4e8d4;"></div>
<div style="left:339px;top:273.4px;width:289.5px;height:60.60000000000002px;box-sizing:border-box;border:1px solid #dcdcdc;border-radius:1px;"></div>
<div style="left:350.5px;top:269.4px;width:66px;height:9px;background:#fff;"></div>
<div class="t" style="left:353px;top:269.20px;height:12px;line-height:12px;font-size:7.45px;color:#222;">箭头文字大小设置</div>
<svg style="left:350.9px;top:280.6px" width="12" height="12" viewBox="0 0 12 12"><circle cx="6" cy="6" r="3.300" fill="#fff" stroke="#1278e4" stroke-width="3.100"/></svg>
<div class="t" style="left:364.6px;top:281.60px;height:12px;line-height:12px;font-size:7.5px;color:#222;">自动设置</div>
<svg style="left:474px;top:280.6px" width="12" height="12" viewBox="0 0 12 12"><circle cx="6" cy="6" r="4.300" fill="#fff" stroke="#a6a6a6" stroke-width=".9"/></svg>
<div class="t" style="left:487.4px;top:281.60px;height:12px;line-height:12px;font-size:7.5px;color:#222;">手动设置</div>
<div style="left:340px;top:293px;width:287.5px;height:0.8px;background:#dcdcdc;"></div>
<svg style="left:352.7px;top:301.0px" width="8.500" height="8.500" viewBox="0 0 9 9"><rect x=".5" y="1" width="8" height="7.500" fill="#dde6f0"/><path d="M1 .5v8M8 .5v8" stroke="#4a6f9f" stroke-width="1.300"/><path d="M1 4.500h7" stroke="#3f7fd0" stroke-width="1"/><path d="M2.800 3.300L1.500 4.500l1.300 1.200M6.200 3.300l1.300 1.200-1.300 1.200" fill="none" stroke="#3f7fd0" stroke-width=".7"/></svg>
<div class="t" style="left:366.4px;top:300.30px;height:12px;line-height:12px;font-size:7.5px;color:#222;">箭头大小</div>
<div style="left:408.1px;top:298.3px;width:45px;height:13.2px;box-sizing:border-box;border:1px solid #d4d4d4;background:#fff;"></div>
<div class="t" style="left:410.8px;top:299.60px;height:12px;line-height:12px;font-size:7.6px;color:#8c8c8c;">221.2125</div>
<svg style="left:352.7px;top:318.8px" width="8.500" height="8.500" viewBox="0 0 9 9"><rect x=".5" y="1" width="8" height="7.500" fill="#dde6f0"/><path d="M1 .5v8M8 .5v8" stroke="#4a6f9f" stroke-width="1.300"/><path d="M2.600 7l1.900-4.500L6.400 7M3.300 5.600h2.400" fill="none" stroke="#3f7fd0" stroke-width=".9"/></svg>
<div class="t" style="left:366.4px;top:318.00px;height:12px;line-height:12px;font-size:7.5px;color:#222;">文字大小</div>
<div style="left:408.1px;top:316.4px;width:45px;height:13.2px;box-sizing:border-box;border:1px solid #d4d4d4;background:#fff;"></div>
<div class="t" style="left:410.8px;top:317.60px;height:12px;line-height:12px;font-size:7.6px;color:#8c8c8c;">258.0813</div>
<div style="left:339px;top:344.7px;width:289.5px;height:22.30000000000001px;box-sizing:border-box;border:1px solid #dcdcdc;border-radius:1px;"></div>
<div style="left:350.5px;top:340.7px;width:51px;height:9px;background:#fff;"></div>
<div class="t" style="left:353px;top:339.50px;height:12px;line-height:12px;font-size:7.45px;color:#222;">文字位置设置</div>
<svg style="left:350.4px;top:351.6px" width="12" height="12" viewBox="0 0 12 12"><circle cx="6" cy="6" r="4.300" fill="#fff" stroke="#a6a6a6" stroke-width=".9"/></svg>
<svg style="left:364.5px;top:352.6px" width="8.500" height="8.500" viewBox="0 0 9 9"><rect x=".5" y="1" width="8" height="7.500" fill="#dde6f0"/><path d="M1 .5v8M8 .5v8" stroke="#4a6f9f" stroke-width="1.300"/><path d="M2.600 7l1.900-4.500L6.400 7M3.300 5.600h2.400" fill="none" stroke="#3f7fd0" stroke-width=".9"/></svg>
<div class="t" style="left:377.5px;top:352.90px;height:12px;line-height:12px;font-size:7.5px;color:#222;">尺寸线上方</div>
<svg style="left:438.2px;top:351.6px" width="12" height="12" viewBox="0 0 12 12"><circle cx="6" cy="6" r="3.300" fill="#fff" stroke="#1278e4" stroke-width="3.100"/></svg>
<svg style="left:452.8px;top:352.6px" width="8.500" height="8.500" viewBox="0 0 9 9"><rect x=".5" y="1" width="8" height="7.500" fill="#dde6f0"/><path d="M1 .5v8M8 .5v8" stroke="#4a6f9f" stroke-width="1.300"/><path d="M2.600 7l1.900-4.500L6.400 7M3.300 5.600h2.400" fill="none" stroke="#3f7fd0" stroke-width=".9"/></svg>
<div class="t" style="left:467px;top:352.90px;height:12px;line-height:12px;font-size:7.5px;color:#222;">尺寸线中间</div>
<div style="left:515.5px;top:382.5px;width:55.2px;height:15.8px;background:#157fe8;"></div>
<div class="t" style="left:543px;top:385.50px;height:12px;line-height:12px;font-size:7.6px;color:#fff;transform:translateX(-50%);">完成</div>
<div style="left:578.3px;top:382.5px;width:54.6px;height:15.8px;box-sizing:border-box;background:#efefef;border:1px solid #dadada;"></div>
<div class="t" style="left:606px;top:385.50px;height:12px;line-height:12px;font-size:7.6px;color:#222;transform:translateX(-50%);">取消</div>
</body></html>
